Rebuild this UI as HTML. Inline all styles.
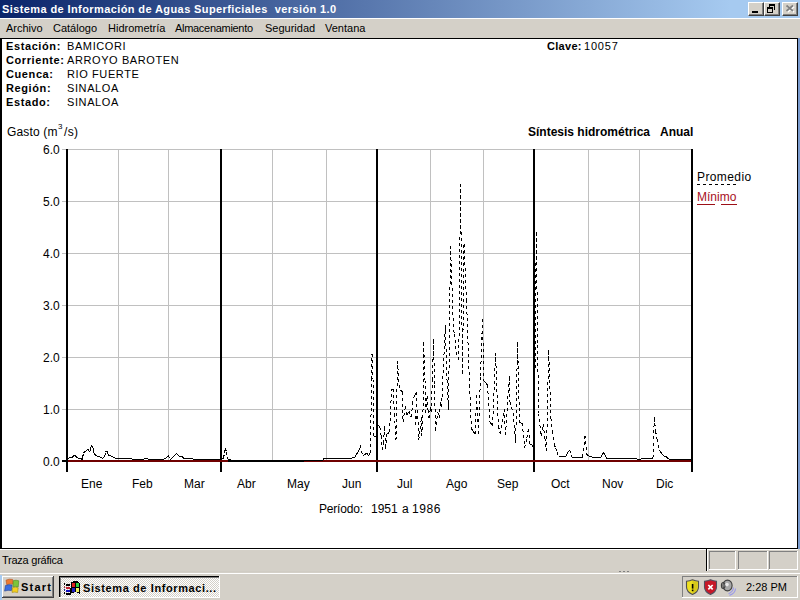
<!DOCTYPE html>
<html><head><meta charset="utf-8">
<style>
*{margin:0;padding:0;box-sizing:border-box}
html,body{width:800px;height:600px;overflow:hidden;background:#d4d0c8;font-family:"Liberation Sans",sans-serif;font-size:11px;color:#000}
.a{position:absolute;white-space:nowrap;line-height:1}
#title{position:absolute;left:0;top:0;width:800px;height:18px;background:linear-gradient(to right,#0a246a 0px,#a6caf0 730px)}
#title .t{left:2px;top:4px;color:#fff;font-weight:bold;font-size:11px;letter-spacing:0.4px}
.btn{position:absolute;top:2px;width:16px;height:14px;background:#d4d0c8;border-top:1px solid #fff;border-left:1px solid #fff;border-right:1px solid #404040;border-bottom:1px solid #404040;box-shadow:inset -1px -1px 0 #808080}
#menu{position:absolute;left:0;top:18px;width:800px;height:20px;background:#d4d0c8;border-top:1px solid #fff}
#menu .a{top:4px}
#client{position:absolute;left:0;top:38px;width:798px;height:511px;background:#fff;border-top:1px solid #000;border-left:2px solid #000;border-right:1px solid #000;border-bottom:1px solid #000}
#edge{position:absolute;left:798px;top:38px;width:2px;height:511px;background:#7b9ccf}
.b{font-weight:bold}
#status{position:absolute;left:0;top:549px;width:800px;height:24px;background:#d4d0c8}
#task{position:absolute;left:0;top:573px;width:800px;height:27px;background:#d4d0c8;border-top:1px solid #fff}
svg{position:absolute;left:0;top:0}
</style></head><body>
<div id="title"><span class="a t">Sistema de Información de Aguas Superficiales&nbsp; versión 1.0</span>
<div class="btn" style="left:748px"></div>
<div class="btn" style="left:764px"></div>
<div class="btn" style="left:782px"></div>
<svg width="800" height="18" shape-rendering="crispEdges">
<rect x="752" y="11" width="6" height="2" fill="#000"/>
<path d="M769 4h6v6h-1v-4h-4v1h-1z" fill="#000"/>
<path d="M767 7h6v6h-6z M768 9v3h4v-3z" fill="#000" fill-rule="evenodd"/>
<path d="M787.5 6.5l6.5 5.5M794 6.5l-6.5 5.5" stroke="#fff" stroke-width="1.7" fill="none" shape-rendering="auto"/>
<path d="M786.5 5.5l6.5 5.5M793 5.5l-6.5 5.5" stroke="#808080" stroke-width="1.7" fill="none" shape-rendering="auto"/>
</svg>
</div>
<div id="menu">
<span class="a" style="left:6px">Archivo</span>
<span class="a" style="left:53px">Catálogo</span>
<span class="a" style="left:108px">Hidrometría</span>
<span class="a" style="left:175px;letter-spacing:-0.3px">Almacenamiento</span>
<span class="a" style="left:265px">Seguridad</span>
<span class="a" style="left:325px">Ventana</span>
</div>
<div id="client"></div>
<div id="edge"></div>

<span class="a b" style="left:6px;top:41px;letter-spacing:0.6px">Estación:</span>
<span class="a b" style="left:6px;top:55px;letter-spacing:0.6px">Corriente:</span>
<span class="a b" style="left:6px;top:69px;letter-spacing:0.6px">Cuenca:</span>
<span class="a b" style="left:6px;top:83px;letter-spacing:0.6px">Región:</span>
<span class="a b" style="left:6px;top:97px;letter-spacing:0.6px">Estado:</span>
<span class="a" style="left:67px;top:41px;letter-spacing:0.6px">BAMICORI</span>
<span class="a" style="left:67px;top:55px;letter-spacing:0.6px">ARROYO BAROTEN</span>
<span class="a" style="left:67px;top:69px;letter-spacing:0.6px">RIO FUERTE</span>
<span class="a" style="left:67px;top:83px;letter-spacing:0.6px">SINALOA</span>
<span class="a" style="left:67px;top:97px;letter-spacing:0.6px">SINALOA</span>
<span class="a b" style="left:547px;top:41px;letter-spacing:0.3px">Clave:</span>
<span class="a" style="left:584px;top:41px;letter-spacing:0.8px">10057</span>

<span class="a" style="left:7px;top:126px;font-size:12px;letter-spacing:0.15px">Gasto (m</span><span class="a" style="left:58px;top:123px;font-size:8px">3</span><span class="a" style="left:64px;top:126px;font-size:12px;letter-spacing:0.3px">/s)</span>
<span class="a b" style="left:528px;top:126px;font-size:12px">Síntesis hidrométrica</span>
<span class="a b" style="left:660px;top:126px;font-size:12px">Anual</span>

<span class="a" style="left:43px;top:144px;font-size:12px">6.0</span>
<span class="a" style="left:43px;top:196px;font-size:12px">5.0</span>
<span class="a" style="left:43px;top:248px;font-size:12px">4.0</span>
<span class="a" style="left:43px;top:300px;font-size:12px">3.0</span>
<span class="a" style="left:43px;top:352px;font-size:12px">2.0</span>
<span class="a" style="left:43px;top:404px;font-size:12px">1.0</span>
<span class="a" style="left:43px;top:456px;font-size:12px">0.0</span>

<span class="a" style="left:81px;top:478px;font-size:12px">Ene</span>
<span class="a" style="left:132px;top:478px;font-size:12px">Feb</span>
<span class="a" style="left:184px;top:478px;font-size:12px">Mar</span>
<span class="a" style="left:237px;top:478px;font-size:12px">Abr</span>
<span class="a" style="left:287px;top:478px;font-size:12px">May</span>
<span class="a" style="left:342px;top:478px;font-size:12px">Jun</span>
<span class="a" style="left:397px;top:478px;font-size:12px">Jul</span>
<span class="a" style="left:446px;top:478px;font-size:12px">Ago</span>
<span class="a" style="left:497px;top:478px;font-size:12px">Sep</span>
<span class="a" style="left:551px;top:478px;font-size:12px">Oct</span>
<span class="a" style="left:602px;top:478px;font-size:12px">Nov</span>
<span class="a" style="left:656px;top:478px;font-size:12px">Dic</span>
<span class="a" style="left:319px;top:503px;font-size:12px;letter-spacing:-0.2px">Período:</span><span class="a" style="left:371px;top:503px;font-size:12px">1951</span><span class="a" style="left:402px;top:503px;font-size:12px">a</span><span class="a" style="left:412px;top:503px;font-size:12px;letter-spacing:0.6px">1986</span>

<span class="a" style="left:697px;top:171px;font-size:12px;letter-spacing:0.4px">Promedio</span>
<span class="a" style="left:697px;top:191px;font-size:12px;color:#a8101c">Mínimo</span>

<svg width="800" height="600" shape-rendering="crispEdges">
<g stroke="#c0c0c0" stroke-width="1">
<path d="M62 149.5H691M62 201.5H691M62 253.5H691M62 305.5H691M62 357.5H691M62 409.5H691"/>
<path d="M118.5 149V461M168.5 149V461M272.5 149V461M326.5 149V461M430.5 149V461M483.5 149V461M588.5 149V461M639.5 149V461"/>
</g>
<g fill="#000">
<rect x="66" y="149" width="2" height="323"/>
<rect x="220" y="149" width="2" height="323"/>
<rect x="376" y="149" width="2" height="323"/>
<rect x="533" y="149" width="2" height="323"/>
<rect x="691" y="149" width="2" height="323"/>
<rect x="62" y="460" width="4" height="2"/>
</g>
<rect x="68" y="460" width="623" height="2" fill="#700000"/>
<rect x="228" y="460" width="76" height="2" fill="#000"/>
<g fill="none" stroke="#000" stroke-width="1" stroke-dasharray="3 3"><path id="dl" d="M67.0 458.5L68.7 458.1M68.7 458.1L70.4 457.6M70.4 457.6L72.2 457.6M72.2 457.6L74.4 455.0M74.4 455.0L75.8 456.4M75.8 456.4L77.2 457.9M77.2 457.9L79.3 458.1M79.3 458.1L81.3 458.4M81.3 458.4L82.0 459.8M82.0 459.8L82.6 457.2M82.6 457.2L83.5 453.5M83.5 453.5L84.8 451.0M84.8 451.0L86.0 451.3M86.0 451.3L87.9 449.0M87.9 449.0L89.4 452.2M89.4 452.2L90.4 450.0M90.4 450.0L91.3 445.4M91.3 445.4L92.9 447.6M92.9 447.6L93.5 450.4M93.5 450.4L93.8 452.9M93.8 452.9L94.8 454.4M94.8 454.4L96.6 456.0M96.6 456.0L99.1 456.3M99.1 456.3L101.6 458.2M101.6 458.2L103.5 457.9M103.5 457.9L104.8 456.3M104.8 456.3L105.4 452.2M105.4 452.2L106.6 450.7M106.6 450.7L107.6 452.6M107.6 452.6L108.5 455.0M108.5 455.0L111.0 456.0M111.0 456.0L112.5 456.8M112.5 456.8L114.1 457.6M114.1 457.6L116.0 458.2M116.0 458.2L117.8 458.2M117.8 458.2L119.5 458.1M119.5 458.1L121.2 458.1M121.2 458.1L123.0 458.1M123.0 458.1L124.8 458.1M124.8 458.1L126.5 458.1M126.5 458.1L128.2 458.0M128.2 458.0L130.0 458.0M130.0 458.0L132.0 459.0M132.0 459.0L133.7 459.0M133.7 459.0L135.4 459.0M135.4 459.0L137.1 459.0M137.1 459.0L138.9 459.0M138.9 459.0L140.6 459.0M140.6 459.0L142.3 459.0M142.3 459.0L144.0 459.0M144.0 459.0L146.0 458.0M146.0 458.0L148.0 459.0M148.0 459.0L149.8 459.0M149.8 459.0L151.6 459.0M151.6 459.0L153.3 459.0M153.3 459.0L155.1 459.0M155.1 459.0L156.9 459.0M156.9 459.0L158.7 459.0M158.7 459.0L160.4 459.0M160.4 459.0L162.2 459.0M162.2 459.0L164.0 459.0M164.0 459.0L166.0 458.0M166.0 458.0L168.4 455.5M168.4 455.5L169.9 460.0M169.9 460.0L171.9 458.0M171.9 458.0L174.0 456.0M174.0 456.0L175.3 454.6M175.3 454.6L176.6 453.3M176.6 453.3L178.9 456.0M178.9 456.0L180.4 456.1M180.4 456.1L181.9 456.3M181.9 456.3L183.4 458.0M183.4 458.0L185.1 458.0M185.1 458.0L186.8 458.0M186.8 458.0L188.6 458.0M188.6 458.0L190.3 458.0M190.3 458.0L192.0 458.0M192.0 458.0L193.0 459.0M193.0 459.0L194.7 459.0M194.7 459.0L196.4 459.0M196.4 459.0L198.1 459.0M198.1 459.0L199.8 459.0M199.8 459.0L201.5 459.0M201.5 459.0L203.2 459.0M203.2 459.0L204.9 459.0M204.9 459.0L206.6 459.0M206.6 459.0L208.4 459.0M208.4 459.0L210.1 459.0M210.1 459.0L211.8 459.0M211.8 459.0L213.5 459.0M213.5 459.0L215.2 459.0M215.2 459.0L216.9 459.0M216.9 459.0L218.6 459.0M218.6 459.0L220.3 459.0M220.3 459.0L222.0 459.0M222.0 459.0L223.5 458.0M223.5 458.0L224.5 453.0M224.5 453.0L225.5 448.0M225.5 448.0L226.5 452.0M226.5 452.0L226.8 457.0M226.8 457.0L228.0 459.0M228.0 459.0L229.5 459.5M229.5 459.5L231.0 460.0M231.0 460.0L232.7 460.0M232.7 460.0L234.4 460.0M234.4 460.0L236.1 460.0M236.1 460.0L237.8 460.0M237.8 460.0L239.5 460.0M239.5 460.0L241.2 460.0M241.2 460.0L242.9 460.0M242.9 460.0L244.6 460.0M244.6 460.0L246.3 460.0M246.3 460.0L248.0 460.0M248.0 460.0L249.7 460.0M249.7 460.0L251.4 460.0M251.4 460.0L253.1 460.0M253.1 460.0L254.8 460.0M254.8 460.0L256.5 460.0M256.5 460.0L258.2 460.0M258.2 460.0L259.9 460.0M259.9 460.0L261.6 460.0M261.6 460.0L263.3 460.0M263.3 460.0L265.0 460.0M265.0 460.0L266.7 460.0M266.7 460.0L268.3 460.0M268.3 460.0L270.0 460.0M270.0 460.0L271.7 460.0M271.7 460.0L273.4 460.0M273.4 460.0L275.1 460.0M275.1 460.0L276.8 460.0M276.8 460.0L278.5 460.0M278.5 460.0L280.2 460.0M280.2 460.0L281.9 460.0M281.9 460.0L283.6 460.0M283.6 460.0L285.3 460.0M285.3 460.0L287.0 460.0M287.0 460.0L288.7 460.0M288.7 460.0L290.4 460.0M290.4 460.0L292.1 460.0M292.1 460.0L293.8 460.0M293.8 460.0L295.5 460.0M295.5 460.0L297.2 460.0M297.2 460.0L298.9 460.0M298.9 460.0L300.6 460.0M300.6 460.0L302.3 460.0M302.3 460.0L304.0 460.0M304.0 460.0L305.7 460.0M305.7 460.0L307.5 460.0M307.5 460.0L309.2 460.0M309.2 460.0L310.9 460.0M310.9 460.0L312.6 460.0M312.6 460.0L314.4 460.0M314.4 460.0L316.1 460.0M316.1 460.0L317.8 460.0M317.8 460.0L319.5 460.0M319.5 460.0L321.3 460.0M321.3 460.0L323.0 460.0M323.0 460.0L324.0 458.5M324.0 458.5L326.0 458.0M326.0 458.0L327.7 458.0M327.7 458.0L329.5 458.0M329.5 458.0L331.2 458.0M331.2 458.0L332.9 458.0M332.9 458.0L334.7 458.0M334.7 458.0L336.4 458.0M336.4 458.0L338.1 458.0M338.1 458.0L339.9 458.0M339.9 458.0L341.6 458.0M341.6 458.0L343.3 458.0M343.3 458.0L345.1 458.0M345.1 458.0L346.8 458.0M346.8 458.0L348.5 458.0M348.5 458.0L350.3 458.0M350.3 458.0L352.0 458.0M352.0 458.0L353.6 457.7M353.6 457.7L355.3 457.4M355.3 457.4L356.0 454.8M356.0 454.8L357.4 452.8M357.4 452.8L358.9 450.8M358.9 450.8L360.4 445.3M360.4 445.3L361.5 451.5M361.5 451.5L363.3 455.6M363.3 455.6L365.5 454.1M365.5 454.1L367.4 452.6M367.4 452.6L368.5 456.3M368.5 456.3L370.5 452.6M370.5 452.6L371.5 379.0M371.5 379.0L372.0 354.0M372.0 354.0L373.0 379.0M373.0 379.0L374.0 436.0M374.0 436.0L376.0 436.3M376.0 436.3L378.0 424.8M378.0 424.8L379.9 427.4M379.9 427.4L381.2 436.3M381.2 436.3L382.5 450.5M382.5 450.5L383.7 442.8M383.7 442.8L384.4 426.0M384.4 426.0L385.7 449.2M385.7 449.2L387.0 433.8M387.0 433.8L389.5 432.5M389.5 432.5L391.5 390.0M391.5 390.0L393.0 389.0M393.0 389.0L394.5 414.5M394.5 414.5L396.0 440.0M396.0 440.0L397.5 360.6M397.5 360.6L399.0 385.0M399.0 385.0L400.5 390.0M400.5 390.0L402.5 392.0M402.5 392.0L403.0 422.0M403.0 422.0L405.5 406.0M405.5 406.0L407.0 415.0M407.0 415.0L409.0 411.0M409.0 411.0L410.0 416.0M410.0 416.0L411.5 417.0M411.5 417.0L412.5 404.0M412.5 404.0L413.5 398.0M413.5 398.0L415.0 395.0M415.0 395.0L416.5 392.0M416.5 392.0L415.5 425.0M415.5 425.0L417.7 410.0M417.7 410.0L418.8 440.0M418.8 440.0L420.1 428.5M420.1 428.5L421.5 417.0M421.5 417.0L421.8 436.0M421.8 436.0L423.0 412.0M423.0 412.0L423.5 342.0M423.5 342.0L425.0 380.0M425.0 380.0L425.5 413.0M425.5 413.0L427.0 396.0M427.0 396.0L428.0 410.0M428.0 410.0L429.0 418.0M429.0 418.0L430.7 407.0M430.7 407.0L431.0 412.0M431.0 412.0L432.5 380.0M432.5 380.0L433.5 338.8M433.5 338.8L434.5 385.0M434.5 385.0L435.5 431.0M435.5 431.0L437.7 412.0M437.7 412.0L439.3 418.0M439.3 418.0L440.4 402.0M440.4 402.0L441.0 407.0M441.0 407.0L442.0 397.0M442.0 397.0L443.7 361.0M443.7 361.0L445.4 325.0M445.4 325.0L447.0 380.0M447.0 380.0L448.5 410.0M448.5 410.0L450.5 245.8M450.5 245.8L452.5 300.0M452.5 300.0L453.5 330.0M453.5 330.0L454.4 333.8M454.4 333.8L456.2 352.5M456.2 352.5L458.8 360.0M458.8 360.0L460.5 184.5M460.5 184.5L462.5 373.8M462.5 373.8L464.0 244.0M464.0 244.0L466.5 300.0M466.5 300.0L468.0 342.5M468.0 342.5L469.5 385.0M469.5 385.0L471.4 428.6M471.4 428.6L473.4 431.5M473.4 431.5L475.3 434.4M475.3 434.4L476.6 395.3M476.6 395.3L478.5 433.8M478.5 433.8L480.5 376.3M480.5 376.3L482.5 318.8M482.5 318.8L484.0 381.0M484.0 381.0L485.8 383.0M485.8 383.0L487.5 385.0M487.5 385.0L490.0 422.0M490.0 422.0L491.3 424.0M491.3 424.0L492.6 426.0M492.6 426.0L494.1 389.5M494.1 389.5L495.5 353.0M495.5 353.0L496.9 389.5M496.9 389.5L498.4 426.0M498.4 426.0L500.3 433.8M500.3 433.8L502.2 421.6M502.2 421.6L504.2 409.4M504.2 409.4L505.5 435.0M505.5 435.0L507.4 405.3M507.4 405.3L509.4 375.6M509.4 375.6L510.0 401.7M510.0 401.7L511.6 407.4M511.6 407.4L513.2 413.2M513.2 413.2L515.7 442.8M515.7 442.8L517.5 341.9M517.5 341.9L519.6 422.0M519.6 422.0L520.9 422.8M520.9 422.8L522.2 423.5M522.2 423.5L524.7 447.9M524.7 447.9L526.7 438.2M526.7 438.2L528.6 428.6M528.6 428.6L529.9 444.0M529.9 444.0L532.4 445.3M532.4 445.3L534.5 452.0M534.5 452.0L535.5 290.0M535.5 290.0L536.5 232.0M536.5 232.0L537.5 345.0M537.5 345.0L538.8 413.5M538.8 413.5L541.0 435.5M541.0 435.5L543.2 424.5M543.2 424.5L544.9 437.8M544.9 437.8L546.5 451.0M546.5 451.0L548.7 349.8M548.7 349.8L550.9 418.0M550.9 418.0L552.5 431.1M552.5 431.1L554.2 444.3M554.2 444.3L555.7 448.3M555.7 448.3L557.1 452.4M557.1 452.4L558.6 456.4M558.6 456.4L560.2 456.5M560.2 456.5L561.9 456.7M561.9 456.7L563.6 456.9M563.6 456.9L565.2 457.0M565.2 457.0L566.7 454.6M566.7 454.6L568.1 452.2M568.1 452.2L569.6 449.8M569.6 449.8L571.8 457.0M571.8 457.0L573.6 457.0M573.6 457.0L575.4 457.0M575.4 457.0L577.2 457.0M577.2 457.0L579.1 457.0M579.1 457.0L580.9 457.0M580.9 457.0L582.7 457.0M582.7 457.0L585.0 435.5M585.0 435.5L587.1 455.3M587.1 455.3L588.8 455.9M588.8 455.9L590.4 456.4M590.4 456.4L592.1 456.9M592.1 456.9L593.7 457.5M593.7 457.5L595.4 457.6M595.4 457.6L597.0 457.8M597.0 457.8L598.6 457.9M598.6 457.9L600.3 458.0M600.3 458.0L602.0 455.1M602.0 455.1L603.8 452.2M603.8 452.2L605.1 455.1M605.1 455.1L606.4 458.1M606.4 458.1L608.1 458.2M608.1 458.2L609.9 458.2M609.9 458.2L611.6 458.2M611.6 458.2L613.3 458.3M613.3 458.3L615.0 458.4M615.0 458.4L616.8 458.4M616.8 458.4L618.5 458.4M618.5 458.4L620.2 458.5M620.2 458.5L622.2 458.3M622.2 458.3L624.1 458.1M624.1 458.1L625.4 458.3M625.4 458.3L626.7 458.5M626.7 458.5L628.6 458.4M628.6 458.4L630.4 458.3M630.4 458.3L632.3 458.3M632.3 458.3L634.1 458.2M634.1 458.2L636.0 458.1M636.0 458.1L637.2 459.0M637.2 459.0L638.9 459.0M638.9 459.0L640.6 459.0M640.6 459.0L642.2 458.9M642.2 458.9L643.9 458.9M643.9 458.9L645.6 458.9M645.6 458.9L647.3 458.9M647.3 458.9L648.9 458.8M648.9 458.8L650.6 458.8M650.6 458.8L652.3 458.8M652.3 458.8L653.0 457.5M653.0 457.5L654.3 416.8M654.3 416.8L655.6 431.2M655.6 431.2L657.0 439.0M657.0 439.0L658.9 449.6M658.9 449.6L660.8 452.2M660.8 452.2L662.8 454.9M662.8 454.9L664.8 456.8M664.8 456.8L665.5 456.2M665.5 456.2L667.1 457.6M667.1 457.6L668.7 459.0M668.7 459.0L670.4 459.0M670.4 459.0L672.1 459.0M672.1 459.0L673.8 459.0M673.8 459.0L675.6 459.0M675.6 459.0L677.3 459.0M677.3 459.0L679.0 459.0M679.0 459.0L680.7 459.0M680.7 459.0L682.4 459.0M682.4 459.0L684.1 459.0M684.1 459.0L685.9 459.0M685.9 459.0L687.6 459.0M687.6 459.0L689.3 459.0M689.3 459.0L691.0 459.0"/></g>
<path d="M697 184.5H736" stroke="#000" stroke-dasharray="3 3"/>
<path d="M697 204.5H737" stroke="#9c1018" stroke-dasharray="18 6"/>
</svg>

<div id="status"><span class="a" style="left:2px;top:6px;letter-spacing:-0.25px">Traza gráfica</span></div>
<svg width="800" height="600" shape-rendering="crispEdges" style="pointer-events:none">
<rect x="0" y="549" width="706" height="1" fill="#fff"/>
<rect x="706" y="549" width="1" height="22" fill="#000"/>
<rect x="707" y="549" width="91" height="1" fill="#fff"/>
<rect x="707" y="549" width="1" height="22" fill="#fff"/>
<g fill="none">
<path d="M709 569.5V551.5H735" stroke="#808080"/><path d="M709 569.5H735.5V551" stroke="#fff"/>
<path d="M738 569.5V551.5H767" stroke="#808080"/><path d="M738 569.5H767.5V551" stroke="#fff"/>
<path d="M769 569.5V551.5H797" stroke="#808080"/><path d="M769 569.5H797.5V551" stroke="#fff"/>
</g>
<rect x="0" y="571" width="800" height="1" fill="#d0ccc4"/>
<rect x="619" y="571" width="2" height="1" fill="#808080"/>
<rect x="623" y="571" width="2" height="1" fill="#808080"/>
<rect x="627" y="571" width="2" height="1" fill="#808080"/>
</svg>
<div id="task"></div>
<svg width="800" height="600" shape-rendering="crispEdges">
<defs><pattern id="dith" width="2" height="2" patternUnits="userSpaceOnUse"><rect width="2" height="2" fill="#fff"/><rect width="1" height="1" fill="#d4d0c8"/><rect x="1" y="1" width="1" height="1" fill="#d4d0c8"/></pattern></defs>
<rect x="0" y="575" width="2" height="25" fill="#a6caf0"/>
<!-- start button -->
<rect x="2" y="576" width="52" height="22" fill="#404040"/>
<rect x="2" y="576" width="51" height="21" fill="#fff"/>
<rect x="3" y="577" width="50" height="20" fill="#808080"/>
<rect x="3" y="577" width="49" height="19" fill="#d4d0c8"/>
<!-- task button pressed -->
<rect x="59" y="576" width="161" height="22" fill="#fff"/>
<rect x="59" y="576" width="160" height="21" fill="#000"/>
<rect x="60" y="577" width="159" height="20" fill="#808080"/>
<rect x="61" y="578" width="158" height="19" fill="url(#dith)"/>
<!-- tray -->
<rect x="682" y="576" width="116" height="22" fill="#fff"/>
<rect x="682" y="576" width="115" height="21" fill="#808080"/>
<rect x="683" y="577" width="114" height="20" fill="#d4d0c8"/>
</svg>
<svg width="800" height="600">
<!-- XP flag start -->
<g stroke-linejoin="round">
<path d="M6 580.2q3-1.6 6.6-.8l.8 4.8q-3.4-.9-6.6.6z" fill="#ee7a30" stroke="#b05020" stroke-width=".6"/>
<path d="M13.4 580.6q2.6-.8 5.4.2l-.6 6.2q-2.6-1-5.4-.2z" fill="#7cc43a" stroke="#4a8a20" stroke-width=".6"/>
<path d="M5.4 585.6q3.2-1.5 6.6-.6l-.6 5.6q-3.4-.9-6.8.5z" fill="#3a6ee0" stroke="#204090" stroke-width=".6"/>
<path d="M12.6 587.6q2.8-.9 5.6.2l-.6 4.8q-2.8-1-5.6-.2z" fill="#f4d020" stroke="#a08a10" stroke-width=".6"/>
</g>
<!-- task icon -->
<g shape-rendering="crispEdges">
<path d="M71 582h2v-1h5v1h1v1h1v11h-1v-1h-2v-1h-3v1h-3v1h-1z" fill="#000"/>
<rect x="72" y="583" width="3" height="4" fill="#e02020"/>
<rect x="76" y="583" width="3" height="4" fill="#30d040"/>
<rect x="72" y="588" width="3" height="4" fill="#2020c0"/>
<rect x="76" y="588" width="3" height="4" fill="#f0f060"/>
<rect x="64" y="583" width="1" height="2" fill="#000"/><rect x="64" y="586" width="1" height="2" fill="#a04040"/><rect x="64" y="589" width="1" height="2" fill="#202080"/><rect x="64" y="592" width="1" height="2" fill="#000"/>
<rect x="66" y="584" width="4" height="2" fill="#000"/><rect x="66" y="587" width="4" height="2" fill="#c02030"/><rect x="66" y="590" width="4" height="2" fill="#1010c0"/><rect x="66" y="593" width="5" height="2" fill="#000"/>
</g>
<!-- shields -->
<path d="M692.5 579.8q3 1.2 6 1.4v5.8q0 4.8-6 7.4q-6-2.6-6-7.4v-5.8q3-.2 6-1.4z" fill="#eee020" stroke="#505050" stroke-width="1.1"/>
<path d="M692.5 581v12.6q5-2.4 5-6.6v-5q-2.5-.3-5-1z" fill="#c8b818" opacity=".6"/>
<rect x="691.8" y="584" width="1.6" height="4.6" fill="#000"/><rect x="691.8" y="589.6" width="1.6" height="1.6" fill="#000"/>
<path d="M710.5 579.8q3 1.2 6 1.4v5.8q0 4.8-6 7.4q-6-2.6-6-7.4v-5.8q3-.2 6-1.4z" fill="#c81828" stroke="#505060" stroke-width="1.1"/>
<path d="M708.3 585l4.4 4.4M712.7 585l-4.4 4.4" stroke="#fff" stroke-width="1.7"/>
<!-- speaker -->
<ellipse cx="727.5" cy="585.5" rx="4.6" ry="5.4" fill="#a8a8a8" stroke="#404040" stroke-width="1.1"/>
<ellipse cx="723.2" cy="585.5" rx="1.8" ry="3" fill="none" stroke="#404040" stroke-width="1.1"/>
<circle cx="727" cy="584.6" r="1.8" fill="#e8e8e8"/>
<path d="M733.5 587.5q-.5 4.5-5 6.2M735.6 588.5q-.6 5.2-6.2 6.8" stroke="#9a9ae8" fill="none" stroke-width="1.2"/>
</svg>
<span class="a b" style="left:21px;top:582px;letter-spacing:1.2px">Start</span>
<span class="a b" style="left:83px;top:583px;letter-spacing:0.6px">Sistema de Informaci...</span>
<span class="a" style="left:746px;top:582px">2:28 PM</span>
</body></html>
